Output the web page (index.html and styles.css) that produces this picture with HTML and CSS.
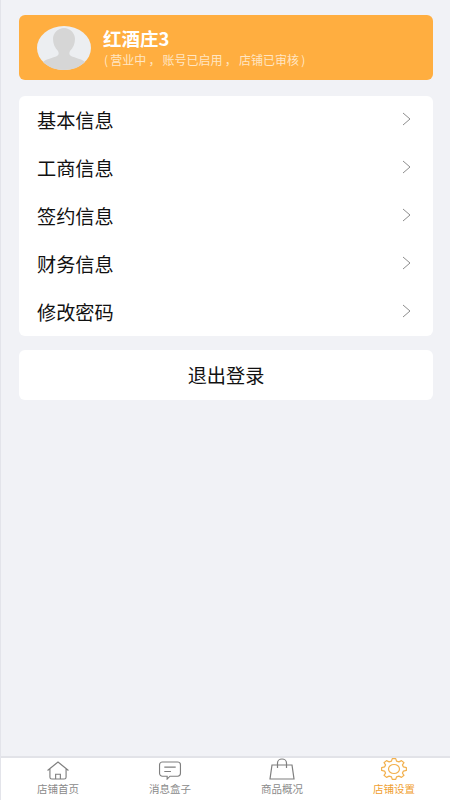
FILE: index.html
```html
<!DOCTYPE html>
<html lang="zh">
<head>
<meta charset="utf-8">
<title>店铺设置</title>
<link rel="stylesheet" href="styles.css">
</head>
<body>
<div class="app">
  <main class="content">
    <section class="profile">
      <svg class="avatar" viewBox="0 0 54 44">
        <ellipse cx="27" cy="22" rx="27" ry="22" fill="#eceef1"/>
        <path d="M6 36c3-3 10-4 14-6 2-1 2-3 1-5-3-3-5-7-5-12 0-6 5-11 11-11s11 5 11 11c0 5-2 9-5 12-1 2-1 4 1 5 4 2 11 3 14 6-5 5-12 8-21 8S11 41 6 36z" fill="#d6d6d6"/>
      </svg>
      <div class="shop">
        <div class="shop-name">红酒庄3</div>
        <div class="shop-status">( 营业中 ， 账号已启用 ， 店铺已审核 )</div>
      </div>
    </section>
    <section class="menu">
      <div class="row"><span class="label">基本信息</span><svg class="chev" viewBox="0 0 9 14"><path d="M1 1l7 6-7 6"/></svg></div>
      <div class="row"><span class="label">工商信息</span><svg class="chev" viewBox="0 0 9 14"><path d="M1 1l7 6-7 6"/></svg></div>
      <div class="row"><span class="label">签约信息</span><svg class="chev" viewBox="0 0 9 14"><path d="M1 1l7 6-7 6"/></svg></div>
      <div class="row"><span class="label">财务信息</span><svg class="chev" viewBox="0 0 9 14"><path d="M1 1l7 6-7 6"/></svg></div>
      <div class="row"><span class="label">修改密码</span><svg class="chev" viewBox="0 0 9 14"><path d="M1 1l7 6-7 6"/></svg></div>
    </section>
    <section class="logout"><span class="label">退出登录</span></section>
  </main>
  <nav class="tabs">
    <div class="tab">
      <svg class="ico" viewBox="0 0 24 20"><path d="M1 10L12 1l11 9M3.500 8v9a2 2 0 0 0 2 2h13a2 2 0 0 0 2-2V8M9.500 19v-5h5v5"/></svg>
      <span>店铺首页</span>
    </div>
    <div class="tab">
      <svg class="ico" viewBox="0 0 24 20"><path d="M4 1h16a3 3 0 0 1 3 3v9a3 3 0 0 1-3 3h-8l-3 3v-3H4a3 3 0 0 1-3-3V4a3 3 0 0 1 3-3zM6 6.500h12M6 11h7"/></svg>
      <span>消息盒子</span>
    </div>
    <div class="tab">
      <svg class="ico ico-bag" viewBox="0 0 26 22"><path d="M3 7h20l2 14H1zM8.500 10V5a4.500 4 0 0 1 9 0v5"/></svg>
      <span>商品概况</span>
    </div>
    <div class="tab active">
      <svg class="ico ico-gear" viewBox="0 0 26 22"><polygon points="10.48,3.08 11.26,.6 14.74,.6 15.52,3.08 17.88,3.9 20.52,2.61 22.99,4.68 21.44,6.9 22.42,8.88 25.38,9.54 25.38,12.46 22.42,13.12 21.44,15.1 22.99,17.32 20.52,19.39 17.88,18.1 15.52,18.92 14.74,21.4 11.26,21.4 10.48,18.92 8.12,18.1 5.48,19.39 3.01,17.32 4.56,15.1 3.58,13.12 .62,12.46 .62,9.54 3.58,8.88 4.56,6.9 3.01,4.68 5.48,2.61 8.12,3.9"/><ellipse cx="13" cy="11" rx="5.500" ry="4.500"/></svg>
      <span>店铺设置</span>
    </div>
  </nav>
</div>
</body>
</html>
```
FILE: styles.css
```css
* { box-sizing: border-box; }
html, body { margin: 0; padding: 0; height: 100%; }
body { font-family: "Noto Sans CJK SC", "Noto Sans", sans-serif; background: #f1f2f6; color: #111; }
.app { width: 450px; height: 800px; display: flex; flex-direction: column; border-left: 1px solid #e3e4ea; overflow: hidden; }
.content { flex: 1; padding: 15px 17px 0 18px; display: flex; flex-direction: column; }
.profile { height: 65px; background: #ffae40; border-radius: 6px; display: flex; align-items: center; padding-left: 18px; gap: 12px; }
.avatar { width: 54px; height: 44px; flex: none; }
.shop { color: #fff; display: flex; flex-direction: column; gap: 5px; }
.shop-name { font-size: 18.500px; line-height: 20px; font-weight: 700; margin-top: -1px; }
.shop-status { font-size: 12px; line-height: 14px; color: #ffe6c4; white-space: nowrap; word-spacing: -0.500px; margin-left: 1px; }
.menu { margin-top: 16px; height: 240px; background: #fff; border-radius: 6px; display: flex; flex-direction: column; }
.row { flex: 1; display: flex; align-items: center; justify-content: space-between; padding: 0 22px 0 18px; }
.label { font-size: 19.200px; line-height: 24px; margin-top: -1px; }
.chev { width: 9px; height: 14px; margin-top: -2px; fill: none; stroke: #8d8d8d; stroke-width: 1; }
.logout { margin-top: 14px; height: 50px; background: #fff; border-radius: 6px; display: flex; align-items: center; justify-content: center; }
.tabs { height: 44px; margin-left: -1px; padding-left: 2px; background: #fff; border-top: 2px solid #e2e3e8; display: grid; grid-template-columns: repeat(4, 1fr); flex: none; }
.tab { display: flex; flex-direction: column; align-items: center; justify-content: flex-start; padding-top: 3px; font-size: 10.500px; line-height: 14px; color: #8a8a8a; }
.tab span { margin-top: 2px; }
.ico { width: 24px; height: 19px; fill: none; stroke: #7f7f7f; stroke-width: 1.200; flex: none; }
.ico-bag { width: 26px; height: 22px; margin-top: -3px; }
.ico-gear { width: 26px; height: 22px; margin-top: -3px; stroke: #f2b14f; stroke-linejoin: round; }
.active { color: #f0a030; }
```
